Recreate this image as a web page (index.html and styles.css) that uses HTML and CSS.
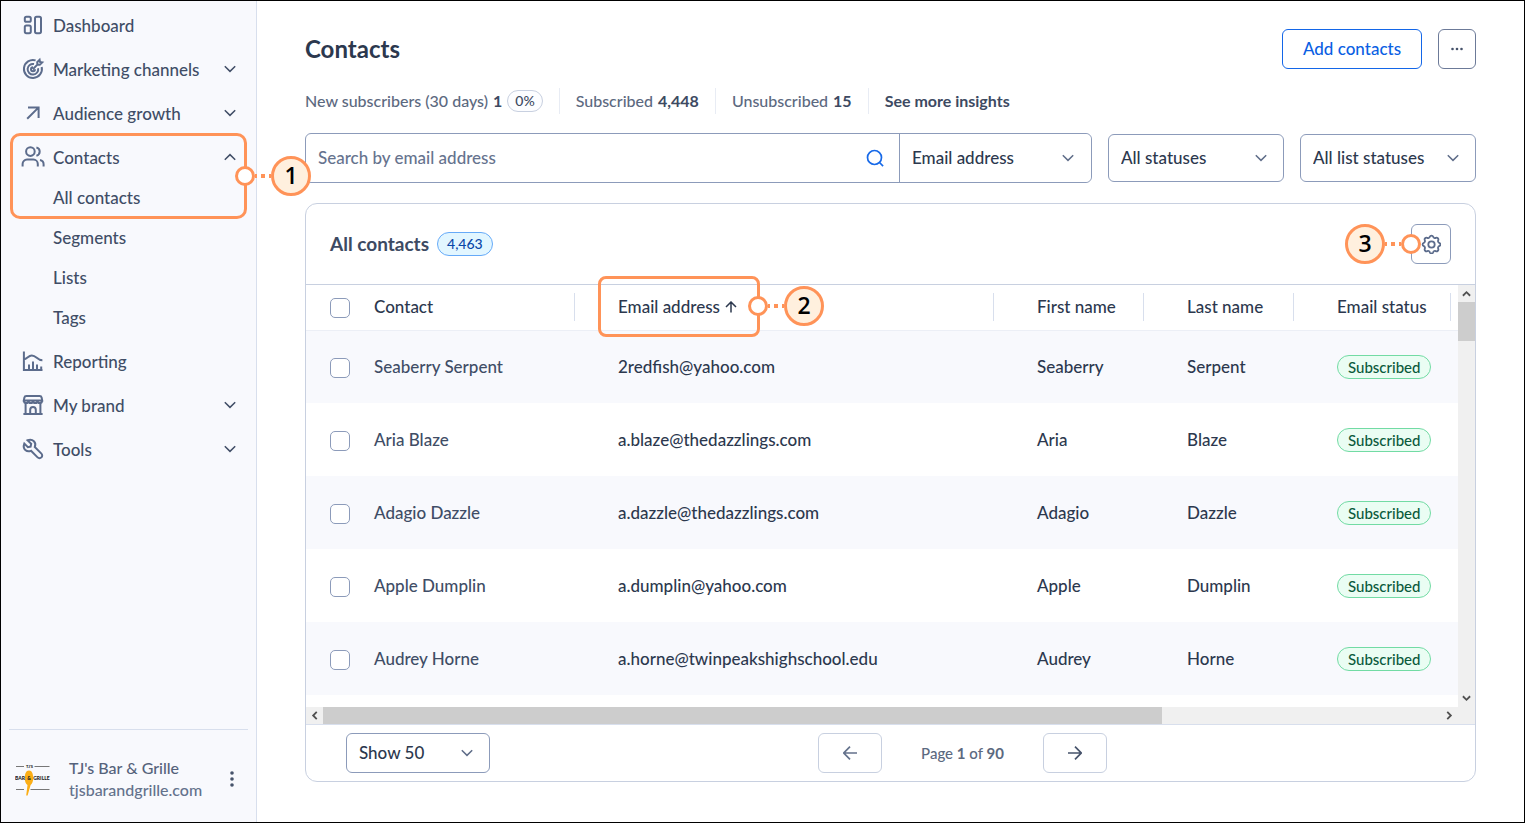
FILE: index.html
```html
<!DOCTYPE html>
<html lang="en">
<head>
  <meta charset="UTF-8">
  <meta name="viewport" content="width=device-width, initial-scale=1">
  <title>Contacts</title>
  <link rel="stylesheet" href="styles.css">
</head>
<body>

  <!-- icons used more than once -->
  <svg class="sprite" aria-hidden="true">
    <symbol id="chevron" viewBox="0 0 12 12"><path d="M.8 3.2 6 8.4l5.2-5.2"/></symbol>
    <symbol id="tick" viewBox="0 0 10 10"><path d="M1 7.500 5 3.500 9 7.500"/></symbol>
  </svg>

  <aside class="sidebar">
    <nav>
      <ul class="nav">
        <li>
          <a class="nav-link" href="#">
            <svg class="icon" viewBox="0 0 20 20"><rect x="1.8" y="1.8" width="6" height="5" rx="1.6"/><rect x="1.8" y="10.4" width="6" height="7.8" rx="1.6"/><rect x="12" y="1.8" width="6" height="16.4" rx="1.6"/></svg>
            <span>Dashboard</span>
          </a>
        </li>
        <li>
          <a class="nav-link" href="#">
            <svg class="icon" viewBox="0 0 20 20"><path d="M12.6 1.4A9 9 0 1 0 18.7 8M11 5.100A5.300 5.300 0 1 0 15.100 9.200M10 8.200A2 2 0 1 0 12 10.200M9.800 10.200 14.600 5.400M14.400 5.600 14.200 3.200 16.600.8 17 3l2.200.4-2.400 2.400z"/></svg>
            <span>Marketing channels</span>
            <svg class="chevron"><use href="#chevron"/></svg>
          </a>
        </li>
        <li>
          <a class="nav-link" href="#">
            <svg class="icon" viewBox="0 0 20 20"><path d="M4.200 15.800 15.400 4.600M5 4.600h10.600v10.400"/></svg>
            <span>Audience growth</span>
            <svg class="chevron"><use href="#chevron"/></svg>
          </a>
        </li>
        <li>
          <a class="nav-link" href="#">
            <svg class="icon" viewBox="0 0 20 20"><circle cx="7.400" cy="4.600" r="4.300"/><path d="M13.400.5a4.200 4.200 0 0 1 0 8.200M-.400 19.600v-2.600a4.400 4.400 0 0 1 4.400-4.400h6.400a4.400 4.400 0 0 1 4.400 4.400v2.600M20.600 19.600v-2.400a4.400 4.400 0 0 0-3.600-4.300"/></svg>
            <span>Contacts</span>
            <svg class="chevron up"><use href="#chevron"/></svg>
          </a>
          <ul class="subnav">
            <li><a href="#">All contacts</a></li>
            <li><a href="#">Segments</a></li>
            <li><a href="#">Lists</a></li>
            <li><a href="#">Tags</a></li>
          </ul>
        </li>
        <li>
          <a class="nav-link" href="#">
            <svg class="icon" viewBox="0 0 20 20"><path d="M.9.500v18.600h18.600M1.200 8.200c2.600 0 4.200-3.800 7.600-3.800 4.800 0 5.200 4.800 10.600 4.800M6 19v-5.600M10 19v-8.400M14 19v-5.600M18.200 19v-3.400"/></svg>
            <span>Reporting</span>
          </a>
        </li>
        <li>
          <a class="nav-link" href="#">
            <svg class="icon" viewBox="0 0 20 20"><path d="M3.400.9h13.200a2 2 0 0 1 2 1.600l.6 2.900H.8l.6-2.900a2 2 0 0 1 2-1.600zM.9 5.400c0 3.600 4.600 3.600 4.600 0 0 3.600 4.500 3.600 4.500 0 0 3.600 4.500 3.600 4.500 0 0 3.600 4.600 3.600 4.600 0M2.600 8.400v10.400M17.400 8.400v10.400M.4 19.100h19.200M7.200 19v-4.200a2.800 2.800 0 0 1 5.600 0v4.200"/></svg>
            <span>My brand</span>
            <svg class="chevron"><use href="#chevron"/></svg>
          </a>
        </li>
        <li>
          <a class="nav-link" href="#">
            <svg class="icon" viewBox="0 0 20 20"><path d="M4.600 1.300 8.200 4.900 7.600 7.600 4.900 8.200 1.300 4.600C.2 7.600.8 9.600 2.300 10.900c1.600 1.500 3.800 1.700 5.700.9l6.600 6.600a2.600 2.600 0 0 0 3.800-3.800L11.800 8c.8-1.900.6-4.200-.9-5.700C9.400.8 7.200.4 4.600 1.300z"/></svg>
            <span>Tools</span>
            <svg class="chevron"><use href="#chevron"/></svg>
          </a>
        </li>
      </ul>
    </nav>

    <div class="account">
      <svg class="account-logo" viewBox="0 0 36 36" role="img" aria-label="TJ's Bar &amp; Grille">
        <path class="rule" d="M1 5.500h8M19.500 5.500h15M1 28.500h8M15.500 28.500h19"/>
        <text class="top" x="14.500" y="7">TJ'S</text>
        <path class="spoon" d="M14 9.500c3 0 4.200 3.500 4.200 7.500 0 3.600-1.200 6-2.600 7l-3 10.500h-1.400l1.300-10.500c-1.700-1-2.700-3.400-2.700-7 0-4 1.200-7.500 4.200-7.500z"/>
        <text x="5" y="19">BAR</text>
        <text x="14" y="19">&amp;</text>
        <text x="26.500" y="19">GRILLE</text>
      </svg>
      <div class="account-text">
        <div class="account-name">TJ's Bar &amp; Grille</div>
        <div>tjsbarandgrille.com</div>
      </div>
      <button class="account-menu" type="button" aria-label="Account menu">
        <svg width="4" height="16" viewBox="0 0 4 16"><circle cx="2" cy="2" r="1.800"/><circle cx="2" cy="8" r="1.800"/><circle cx="2" cy="14" r="1.800"/></svg>
      </button>
    </div>
  </aside>

  <main class="main">
    <header class="page-head">
      <h1>Contacts</h1>
      <button class="btn btn-primary" type="button">Add contacts</button>
      <button class="btn btn-more" type="button" aria-label="More">
        <svg width="12" height="4" viewBox="0 0 12 4"><circle cx="1.500" cy="2" r="1.300"/><circle cx="6" cy="2" r="1.300"/><circle cx="10.500" cy="2" r="1.300"/></svg>
      </button>
    </header>

    <div class="stats">
      <div>New subscribers (30 days) <b>1</b><span class="percent">0%</span></div>
      <div>Subscribed <b>4,448</b></div>
      <div>Unsubscribed <b>15</b></div>
      <a href="#">See more insights</a>
    </div>

    <form class="filters">
      <div class="search">
        <input type="text" placeholder="Search by email address" aria-label="Search by email address">
        <button class="search-btn" type="button" aria-label="Search">
          <svg width="18" height="18" viewBox="0 0 18 18"><circle cx="8.500" cy="8.500" r="7"/><path d="m13.500 13.500 3.600 3.600"/></svg>
        </button>
        <div class="select search-by">
          <select aria-label="Search by"><option>Email address</option></select>
          <svg class="chevron"><use href="#chevron"/></svg>
        </div>
      </div>
      <div class="select filter">
        <select aria-label="Status"><option>All statuses</option></select>
        <svg class="chevron"><use href="#chevron"/></svg>
      </div>
      <div class="select filter">
        <select aria-label="List status"><option>All list statuses</option></select>
        <svg class="chevron"><use href="#chevron"/></svg>
      </div>
    </form>

    <section class="card">
      <div class="card-head">
        <h2>All contacts</h2>
        <span class="count">4,463</span>
        <button class="btn btn-settings" type="button" aria-label="Table settings">
          <svg width="20" height="20" viewBox="0 0 20 20"><circle cx="10.500" cy="10.500" r="3.200"/><path transform="translate(.5 .5)" d="M8.300 2.300a1.800 1.800 0 0 1 3.400 0 1.800 1.800 0 0 0 2.600 1.100 1.800 1.800 0 0 1 2.400 2.400 1.800 1.800 0 0 0 1 2.500 1.800 1.800 0 0 1 0 3.400 1.800 1.800 0 0 0-1 2.500 1.800 1.800 0 0 1-2.400 2.400 1.800 1.800 0 0 0-2.600 1.100 1.800 1.800 0 0 1-3.400 0 1.800 1.800 0 0 0-2.600-1.100 1.800 1.800 0 0 1-2.400-2.400 1.800 1.800 0 0 0-1-2.500 1.800 1.800 0 0 1 0-3.400 1.800 1.800 0 0 0 1-2.500 1.800 1.800 0 0 1 2.400-2.400 1.800 1.800 0 0 0 2.600-1.100z"/></svg>
        </button>
      </div>

      <div class="grid">
        <div class="grid-view">
          <table>
            <colgroup>
              <col class="col-check"><col class="col-contact"><col><col class="col-name"><col class="col-name"><col class="col-status">
            </colgroup>
            <thead>
              <tr>
                <th class="check"><input type="checkbox" aria-label="Select all"></th>
                <th><div>Contact</div></th>
                <th><div>Email address <svg class="sort" width="12" height="12" viewBox="0 0 12 12"><path d="M6 11.500V1M1 6l5-5 5 5"/></svg></div></th>
                <th><div>First name</div></th>
                <th><div>Last name</div></th>
                <th><div>Email status</div></th>
              </tr>
            </thead>
            <tbody>
              <tr>
                <td class="check"><input type="checkbox" aria-label="Select Seaberry Serpent"></td>
                <td><a href="#">Seaberry Serpent</a></td>
                <td>2redfish@yahoo.com</td>
                <td>Seaberry</td>
                <td>Serpent</td>
                <td><span class="status">Subscribed</span></td>
              </tr>
              <tr>
                <td class="check"><input type="checkbox" aria-label="Select Aria Blaze"></td>
                <td><a href="#">Aria Blaze</a></td>
                <td>a.blaze@thedazzlings.com</td>
                <td>Aria</td>
                <td>Blaze</td>
                <td><span class="status">Subscribed</span></td>
              </tr>
              <tr>
                <td class="check"><input type="checkbox" aria-label="Select Adagio Dazzle"></td>
                <td><a href="#">Adagio Dazzle</a></td>
                <td>a.dazzle@thedazzlings.com</td>
                <td>Adagio</td>
                <td>Dazzle</td>
                <td><span class="status">Subscribed</span></td>
              </tr>
              <tr>
                <td class="check"><input type="checkbox" aria-label="Select Apple Dumplin"></td>
                <td><a href="#">Apple Dumplin</a></td>
                <td>a.dumplin@yahoo.com</td>
                <td>Apple</td>
                <td>Dumplin</td>
                <td><span class="status">Subscribed</span></td>
              </tr>
              <tr>
                <td class="check"><input type="checkbox" aria-label="Select Audrey Horne"></td>
                <td><a href="#">Audrey Horne</a></td>
                <td>a.horne@twinpeakshighschool.edu</td>
                <td>Audrey</td>
                <td>Horne</td>
                <td><span class="status">Subscribed</span></td>
              </tr>
            </tbody>
          </table>
        </div>
        <div class="bar bar-y" aria-hidden="true">
          <svg><use href="#tick"/></svg>
          <div class="thumb"></div>
          <svg class="down"><use href="#tick"/></svg>
        </div>
        <div class="bar bar-x" aria-hidden="true">
          <svg class="left"><use href="#tick"/></svg>
          <div class="track"><div class="thumb"></div></div>
          <svg class="right"><use href="#tick"/></svg>
        </div>
        <div class="bar"></div>
      </div>

      <footer class="card-foot">
        <div class="select page-size">
          <select aria-label="Rows per page"><option>Show 50</option></select>
          <svg class="chevron"><use href="#chevron"/></svg>
        </div>
        <div class="pager">
          <button class="btn btn-page" type="button" aria-label="Previous page">
            <svg width="14" height="14" viewBox="0 0 14 14"><path d="M14 7H1M7 .7.800 7 7 13.300"/></svg>
          </button>
          <span>Page <b>1</b> of <b>90</b></span>
          <button class="btn btn-page next" type="button" aria-label="Next page">
            <svg width="14" height="14" viewBox="0 0 14 14"><path d="M0 7h13M7 .7 13.200 7 7 13.300"/></svg>
          </button>
        </div>
      </footer>
    </section>
  </main>

  <!-- numbered callouts on top of the page -->
  <div class="outline outline-1"></div>
  <div class="outline outline-2"></div>
  <div class="marker marker-1"><i class="knob"></i><i class="dots"></i><span>1</span></div>
  <div class="marker marker-2"><i class="knob"></i><i class="dots"></i><span>2</span></div>
  <div class="marker marker-3"><i class="knob"></i><i class="dots"></i><span>3</span></div>

</body>
</html>
```
FILE: styles.css
```css
* {
  box-sizing: border-box;
}

body {
  position: relative;
  display: flex;
  height: 100vh;
  margin: 0;
  border: 1px solid #000;
  background: #fff;
  color: #2c384e;
  font-family: Lato, sans-serif;
  font-size: 17px;
  font-weight: 500;
  line-height: 20px;
}

a {
  color: inherit;
  text-decoration: none;
}

ul {
  list-style: none;
  margin: 0;
  padding: 0;
}

button, input, select {
  font: inherit;
  color: inherit;
}

svg {
  display: block;
  flex: none;
  fill: none;
  stroke: currentColor;
}

.sprite {
  position: absolute;
  width: 0;
  height: 0;
}

.chevron {
  width: 12px;
  height: 12px;
  stroke-width: 1.5;
}

.up {
  transform: rotate(180deg);
}

/* sidebar */

.sidebar {
  display: flex;
  flex-direction: column;
  justify-content: space-between;
  flex: none;
  width: 256px;
  border-right: 1px solid #d8dfed;
  background: #f8f9fd;
  color: #404d66;
}

.nav {
  display: flex;
  flex-direction: column;
  gap: 4px;
  padding: 4px 20px 0 22px;
}

.nav-link {
  display: flex;
  align-items: center;
  gap: 10px;
  height: 40px;
}

.nav-link span {
  flex: 1;
  padding-top: 2px;
}

.icon {
  width: 20px;
  height: 20px;
  color: #5c6c8c;
  stroke-width: 2;
  overflow: visible;
}

.subnav a {
  display: flex;
  align-items: center;
  height: 40px;
  padding: 2px 0 0 30px;
}

.account {
  display: flex;
  align-items: center;
  margin: 0 8px;
  padding: 27px 14px 21px 6px;
  border-top: 1px solid #d8dfed;
  color: #64728c;
  font-size: 16px;
  line-height: 22px;
}

.account-logo {
  width: 36px;
  height: 36px;
  margin-right: 18px;
  stroke: none;
}

.account-logo text {
  fill: #222;
  font-size: 5px;
  font-weight: 900;
  text-anchor: middle;
}

.account-logo .top {
  font-size: 4px;
}

.account-logo .rule {
  stroke: #777;
}

.account-logo .spoon {
  fill: #fbae17;
}

.account-text {
  flex: 1;
}

.account-name {
  color: #55627b;
}

.account-menu {
  padding: 0;
  border: 0;
  background: none;
}

.account-menu svg, .btn-more svg {
  fill: #46536b;
  stroke: none;
}

/* page */

.main {
  display: flex;
  flex-direction: column;
  flex: 1;
  min-width: 0;
  padding: 28px 48px 40px;
}

.page-head {
  display: flex;
  align-items: center;
  gap: 16px;
}

h1 {
  flex: 1;
  margin: 0;
  font-size: 24px;
  font-weight: 700;
}

.btn {
  display: flex;
  align-items: center;
  justify-content: center;
  height: 40px;
  padding: 0;
  border: 1px solid #8c9bba;
  border-radius: 6px;
  background: #fff;
}

.btn-primary {
  width: 140px;
  border-color: #1366e8;
  color: #0b5fe3;
}

.btn-more {
  width: 38px;
  border-color: #6c7a98;
}

.stats {
  display: flex;
  margin-top: 19px;
  color: #5c6980;
  font-size: 16px;
  line-height: 26px;
}

.stats > * {
  display: flex;
  align-items: center;
  gap: 5px;
  height: 26px;
  margin-right: 16px;
  padding-right: 16px;
  border-right: 1px solid #e8ecf4;
}

.stats > a {
  border: 0;
  color: #3d4a62;
  font-weight: 700;
}

.stats b {
  color: #3d4a62;
}

.percent {
  height: 22px;
  padding: 0 7px;
  border: 1px solid #c8d0e0;
  border-radius: 11px;
  background: #fcfdff;
  color: #3d4a62;
  font-size: 14px;
  line-height: 20px;
}

.filters {
  display: flex;
  align-items: center;
  gap: 16px;
  margin-top: 19px;
}

.search {
  display: flex;
  flex: 1;
  height: 50px;
  border: 1px solid #8c9bba;
  border-radius: 6px;
}

.search input {
  flex: 1;
  min-width: 0;
  padding: 0 12px;
  border: 0;
  background: none;
}

.search input::placeholder {
  color: #66738e;
  opacity: 1;
}

.search-btn {
  padding: 0 15px;
  border: 0;
  background: none;
  color: #1769e8;
  stroke-width: 1.7;
}

.select {
  position: relative;
}

.select select {
  width: 100%;
  height: 100%;
  padding: 0 12px;
  border: 1px solid #8c9bba;
  border-radius: 6px;
  background: #fff;
  appearance: none;
}

.select .chevron {
  position: absolute;
  top: 50%;
  right: 17px;
  margin-top: -6px;
  color: #5f6d89;
  pointer-events: none;
}

.search-by {
  width: 192px;
}

.search-by select {
  border-width: 0 0 0 1px;
  border-radius: 0 6px 6px 0;
}

.filter {
  width: 176px;
  height: 48px;
}

/* contacts table */

.card {
  display: flex;
  flex-direction: column;
  flex: 1;
  min-height: 0;
  margin-top: 20px;
  border: 1px solid #c8d0e0;
  border-radius: 12px;
  overflow: hidden;
}

.card-head {
  display: flex;
  align-items: center;
  gap: 8px;
  padding: 20px 24px;
  border-bottom: 1px solid #c8d0e0;
}

h2 {
  margin: 0;
  color: #3d4a62;
  font-size: 19px;
  font-weight: 700;
}

.count {
  height: 24px;
  padding: 0 9px;
  border: 1px solid #66aaf8;
  border-radius: 12px;
  background: #e2f6ff;
  color: #0a47a8;
  font-size: 14px;
  line-height: 22px;
}

.btn-settings {
  width: 40px;
  margin-left: auto;
  color: #5c6c8c;
  stroke-width: 1.8;
}

.grid {
  display: grid;
  grid-template-columns: 1fr 17px;
  grid-template-rows: 1fr 17px;
  flex: 1;
  min-height: 0;
}

.grid-view {
  overflow: hidden;
}

table {
  width: 100%;
  border-collapse: collapse;
  table-layout: fixed;
}

.col-check {
  width: 44px;
}

.col-contact {
  width: 244px;
}

.col-name {
  width: 150px;
}

.col-status {
  width: 145px;
}

th {
  height: 45px;
  padding: 0 19px 0 24px;
  border-bottom: 1px solid #eceff6;
  font-weight: 500;
  text-align: left;
}

th:last-child {
  padding-right: 7px;
}

th div {
  display: flex;
  align-items: center;
  gap: 5px;
  height: 28px;
  border-right: 1px solid #d8dfed;
  white-space: nowrap;
}

.sort {
  stroke-width: 1.5;
}

td {
  height: 73px;
  padding: 0 0 0 24px;
}

tbody tr:nth-child(odd) {
  background: #f8f9fd;
}

td a {
  color: #404d66;
}

.check {
  padding-right: 0;
}

.check input {
  display: block;
  width: 20px;
  height: 20px;
  margin: 2px 0 0;
  border: 1px solid #8c9bba;
  border-radius: 5px;
  background: #fff;
  appearance: none;
}

.status {
  display: inline-block;
  height: 24px;
  padding: 0 10px;
  border: 1px solid #72dba4;
  border-radius: 12px;
  background: #eafdf3;
  color: #0a5a3c;
  font-size: 15px;
  line-height: 22px;
}

.bar {
  display: flex;
  background: #f0f0f0;
  color: #505050;
}

.bar svg {
  width: 9px;
  height: 9px;
  margin: 4px;
  stroke-width: 2;
}

.bar .thumb {
  background: #cdcdcd;
}

.bar-y {
  flex-direction: column;
}

.bar-y .thumb {
  height: 39px;
}

.bar-y .down {
  margin-top: auto;
  transform: rotate(180deg);
}

.left {
  transform: rotate(-90deg);
}

.right {
  transform: rotate(90deg);
}

.bar-x .track {
  display: flex;
  flex: 1;
}

.bar-x .thumb {
  width: 75%;
}

.card-foot {
  display: flex;
  padding: 8px 40px;
  border-top: 1px solid #d8dfed;
}

.page-size {
  width: 144px;
  height: 40px;
}

.pager {
  display: flex;
  align-items: center;
  justify-content: center;
  flex: 1;
  gap: 39px;
  color: #5c6980;
  font-size: 15px;
}

.btn-page {
  width: 64px;
  border-color: #c8d0e0;
  color: #64728c;
  stroke-width: 1.7;
}

.next {
  color: #46536b;
}

/* callouts */

.outline {
  position: absolute;
  border: 3px solid #ff9358;
  border-radius: 10px;
  pointer-events: none;
}

.outline-1 {
  left: 9px;
  top: 132px;
  width: 237px;
  height: 86px;
}

.outline-2 {
  left: 597px;
  top: 275px;
  width: 162px;
  height: 61px;
  border-radius: 8px;
}

.marker {
  position: absolute;
  display: flex;
  align-items: center;
  pointer-events: none;
}

.marker-1 {
  left: 234px;
  top: 155px;
}

.marker-2 {
  left: 747px;
  top: 285px;
}

.marker-3 {
  right: 103px;
  top: 223px;
  flex-direction: row-reverse;
}

.knob {
  width: 20px;
  height: 20px;
  border: 3px solid #ff9358;
  border-radius: 50%;
  background: #fff;
}

.dots {
  width: 16px;
  height: 4px;
  background: repeating-linear-gradient(90deg, #ff9358 0 4px, transparent 4px 8px) -2px 0 / 24px 4px;
}

.marker span {
  width: 40px;
  height: 40px;
  border: 3px solid #ff9358;
  border-radius: 50%;
  background: #fff0de;
  color: #000;
  font-family: "Open Sans", "Noto Sans", sans-serif;
  font-size: 23px;
  font-weight: 600;
  line-height: 33px;
  text-align: center;
}
```
